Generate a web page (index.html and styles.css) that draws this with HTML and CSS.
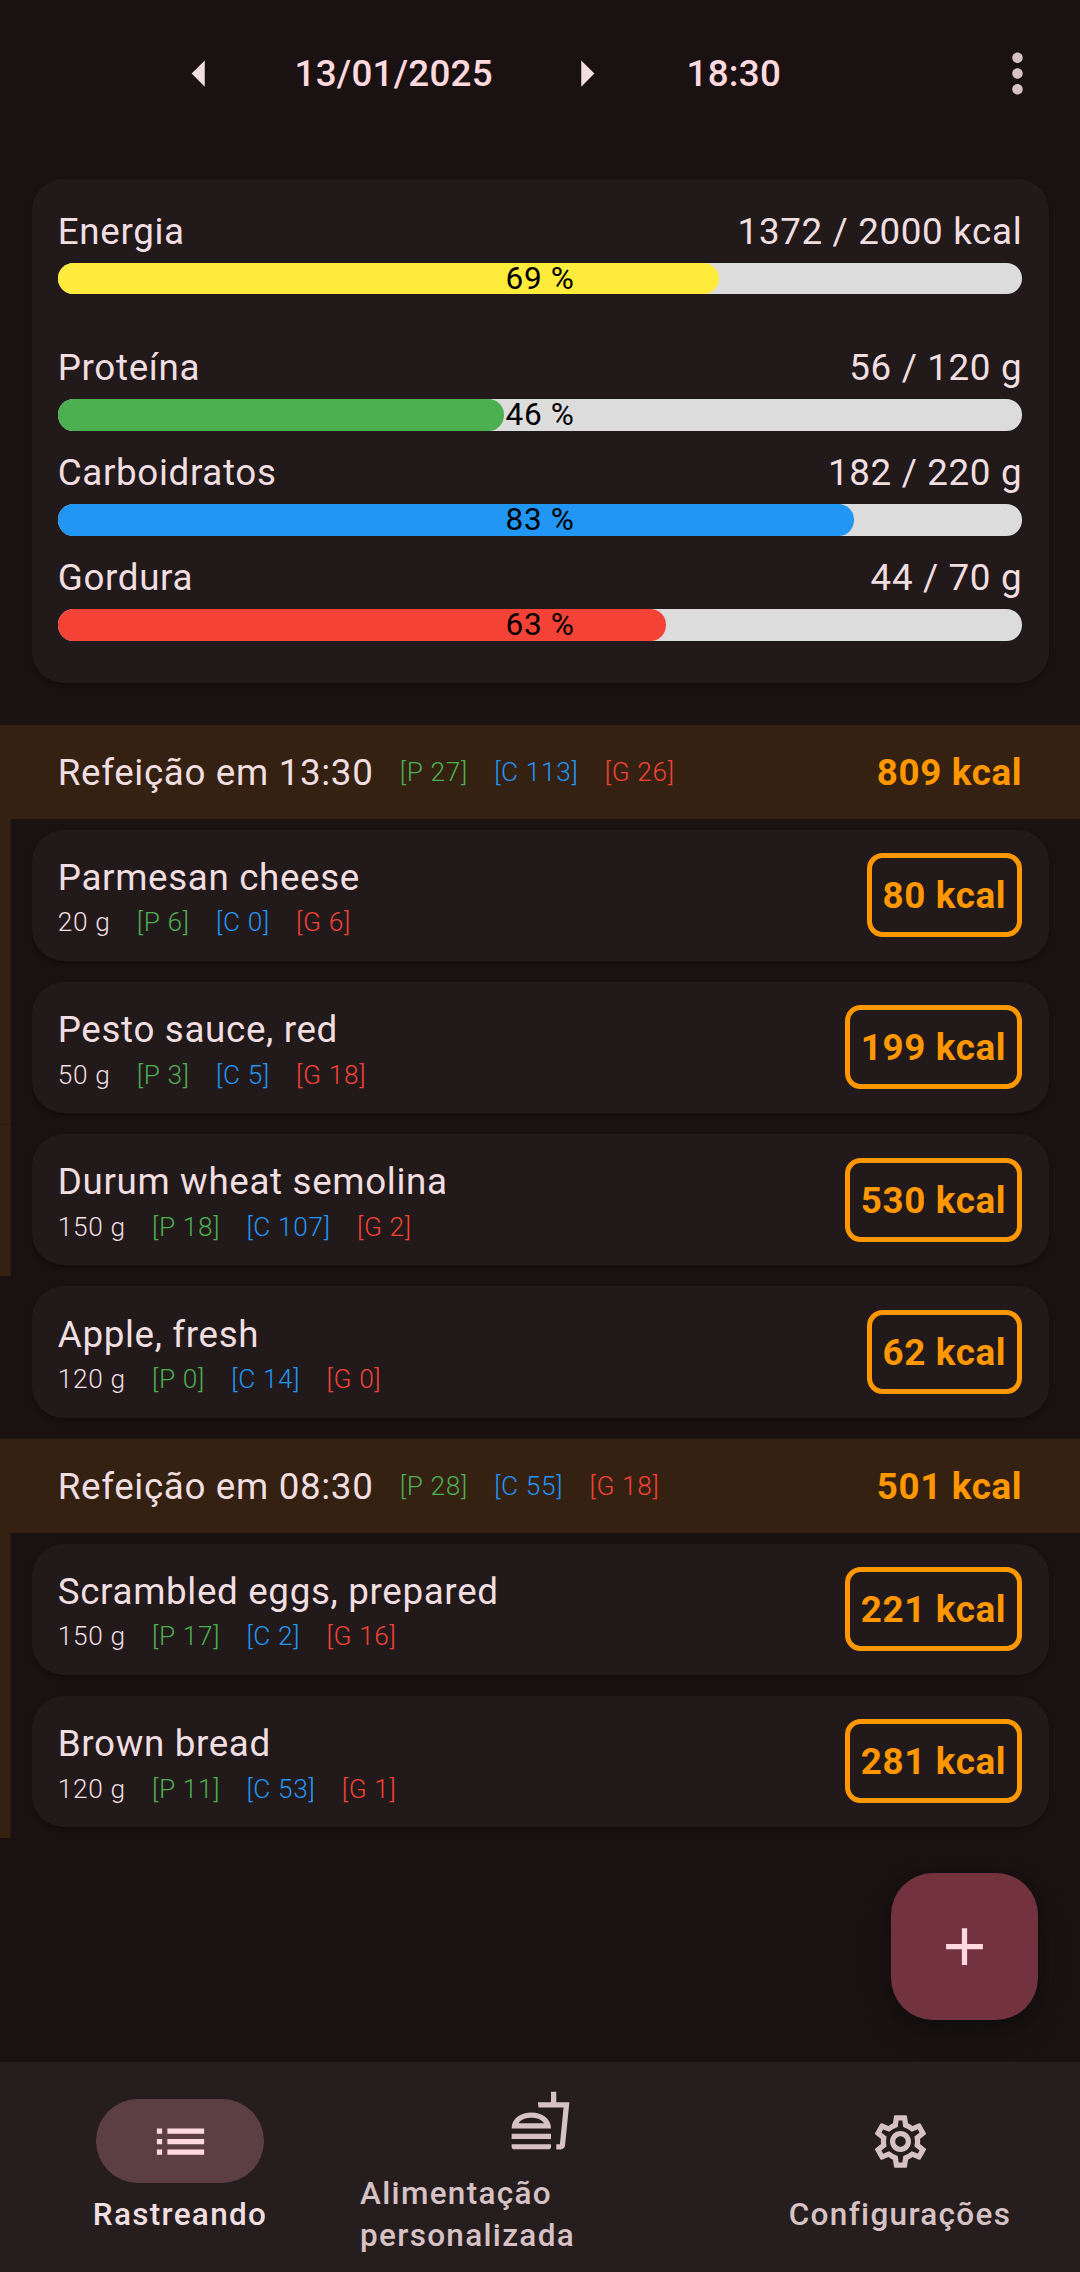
FILE: index.html
```
<!DOCTYPE html>
<html lang="pt-BR">
<head>
<meta charset="utf-8">
<title>Rastreando</title>
<link rel="stylesheet" href="styles.css">
</head>
<body>
<div class="app">
  <header class="topbar">
    <svg class="icon prev" viewBox="0 0 24 24"><path d="M14 7l-5 5 5 5V7z"/></svg>
    <span class="date">13/01/2025</span>
    <svg class="icon next" viewBox="0 0 24 24"><path d="M10 17l5-5-5-5v10z"/></svg>
    <span class="time">18:30</span>
    <svg class="icon more" viewBox="0 0 24 24"><path d="M12 8c1.1 0 2-.9 2-2s-.9-2-2-2-2 .9-2 2 .9 2 2 2zm0 2c-1.1 0-2 .9-2 2s.9 2 2 2 2-.9 2-2-.9-2-2-2zm0 6c-1.1 0-2 .9-2 2s.9 2 2 2 2-.9 2-2-.9-2-2-2z"/></svg>
  </header>

  <section class="card summary">
    <div class="goal energy">
      <div class="goal-text"><span>Energia</span><span>1372 / 2000 kcal</span></div>
      <div class="bar"><div class="fill yellow" style="width:68.6%"></div><span class="pct">69 %</span></div>
    </div>
    <div class="goal">
      <div class="goal-text"><span>Proteína</span><span>56 / 120 g</span></div>
      <div class="bar"><div class="fill green" style="width:46.3%"></div><span class="pct">46 %</span></div>
    </div>
    <div class="goal">
      <div class="goal-text"><span>Carboidratos</span><span>182 / 220 g</span></div>
      <div class="bar"><div class="fill blue" style="width:82.6%"></div><span class="pct">83 %</span></div>
    </div>
    <div class="goal">
      <div class="goal-text"><span>Gordura</span><span>44 / 70 g</span></div>
      <div class="bar"><div class="fill red" style="width:63.1%"></div><span class="pct">63 %</span></div>
    </div>
  </section>

  <main class="meals">
    <div class="meal-head">
      <span>Refeição em 13:30</span>
      <div class="macros"><span class="p">[P 27]</span><span class="c">[C 113]</span><span class="g">[G 26]</span></div>
      <span class="kcal">809 kcal</span>
    </div>
    <div class="row in-meal"><div class="card food">
      <div class="info"><div class="name">Parmesan cheese</div><div class="macros"><span>20 g</span><span class="p">[P 6]</span><span class="c">[C 0]</span><span class="g">[G 6]</span></div></div>
      <span class="badge">80 kcal</span>
    </div></div>
    <div class="row in-meal"><div class="card food">
      <div class="info"><div class="name">Pesto sauce, red</div><div class="macros"><span>50 g</span><span class="p">[P 3]</span><span class="c">[C 5]</span><span class="g">[G 18]</span></div></div>
      <span class="badge">199 kcal</span>
    </div></div>
    <div class="row in-meal seam"><div class="card food">
      <div class="info"><div class="name">Durum wheat semolina</div><div class="macros"><span>150 g</span><span class="p">[P 18]</span><span class="c">[C 107]</span><span class="g">[G 2]</span></div></div>
      <span class="badge">530 kcal</span>
    </div></div>
    <div class="row"><div class="card food">
      <div class="info"><div class="name">Apple, fresh</div><div class="macros"><span>120 g</span><span class="p">[P 0]</span><span class="c">[C 14]</span><span class="g">[G 0]</span></div></div>
      <span class="badge">62 kcal</span>
    </div></div>
    <div class="meal-head">
      <span>Refeição em 08:30</span>
      <div class="macros"><span class="p">[P 28]</span><span class="c">[C 55]</span><span class="g">[G 18]</span></div>
      <span class="kcal">501 kcal</span>
    </div>
    <div class="row in-meal"><div class="card food">
      <div class="info"><div class="name">Scrambled eggs, prepared</div><div class="macros"><span>150 g</span><span class="p">[P 17]</span><span class="c">[C 2]</span><span class="g">[G 16]</span></div></div>
      <span class="badge">221 kcal</span>
    </div></div>
    <div class="row in-meal"><div class="card food">
      <div class="info"><div class="name">Brown bread</div><div class="macros"><span>120 g</span><span class="p">[P 11]</span><span class="c">[C 53]</span><span class="g">[G 1]</span></div></div>
      <span class="badge">281 kcal</span>
    </div></div>
  </main>

  <button class="fab" aria-label="Adicionar"><svg class="icon" viewBox="0 0 24 24"><path d="M19 13h-6v6h-2v-6H5v-2h6V5h2v6h6v2z"/></svg></button>

  <nav class="nav">
    <a class="tab active">
      <span class="pill"><svg class="icon" viewBox="0 0 24 24"><path d="M3 13h2v-2H3v2zm0 4h2v-2H3v2zm0-8h2V7H3v2zm4 4h14v-2H7v2zm0 4h14v-2H7v2zM7 7v2h14V7H7z"/></svg></span>
      <span class="label">Rastreando</span>
    </a>
    <a class="tab">
      <span class="pill"><svg class="icon" viewBox="0 0 24 24"><path d="M1 21.98c0 .56.45 1.01 1.01 1.01H15c.56 0 1.01-.45 1.01-1.01V21H1v.98zM8.5 8.99C4.75 8.99 1 11 1 15h15c0-4-3.75-6.01-7.5-6.01zM3.62 13c1.11-1.55 3.47-2.01 4.88-2.01s3.77.46 4.88 2.01H3.62zM1 17h15v2H1zM18 5V1h-2v4h-5l.23 2h9.56l-1.4 14H18v2h1.72c.84 0 1.53-.65 1.63-1.47L23 5h-5z"/></svg></span>
      <span class="label">Alimentação personalizada</span>
    </a>
    <a class="tab">
      <span class="pill"><svg class="icon" viewBox="0 0 24 24"><path d="M19.43 12.98c.04-.32.07-.64.07-.98 0-.34-.03-.66-.07-.98l2.11-1.65c.19-.15.24-.42.12-.64l-2-3.46c-.09-.16-.26-.25-.44-.25-.06 0-.12.01-.17.03l-2.49 1c-.52-.4-1.08-.73-1.69-.98l-.38-2.65C14.46 2.18 14.25 2 14 2h-4c-.25 0-.46.18-.49.42l-.38 2.65c-.61.25-1.17.59-1.69.98l-2.49-1c-.06-.02-.12-.03-.18-.03-.17 0-.34.09-.43.25l-2 3.46c-.13.22-.07.49.12.64l2.11 1.65c-.04.32-.07.65-.07.98 0 .33.03.66.07.98l-2.11 1.65c-.19.15-.24.42-.12.64l2 3.46c.09.16.26.25.44.25.06 0 .12-.01.17-.03l2.49-1c.52.4 1.08.73 1.69.98l.38 2.65c.03.24.24.42.49.42h4c.25 0 .46-.18.49-.42l.38-2.65c.61-.25 1.17-.59 1.69-.98l2.49 1c.06.02.12.03.18.03.17 0 .34-.09.43-.25l2-3.46c.12-.22.07-.49-.12-.64l-2.11-1.65zm-1.98-1.71c.04.31.05.52.05.73 0 .21-.02.43-.05.73l-.14 1.13.89.7 1.08.84-.7 1.21-1.27-.51-1.04-.42-.9.68c-.43.32-.84.56-1.25.73l-1.06.43-.16 1.13-.2 1.35h-1.4l-.19-1.35-.16-1.13-1.06-.43c-.43-.18-.83-.41-1.23-.71l-.91-.7-1.06.43-1.27.51-.7-1.21 1.08-.84.89-.7-.14-1.13c-.03-.31-.05-.54-.05-.74s.02-.43.05-.73l.14-1.13-.89-.7-1.08-.84.7-1.21 1.27.51 1.04.42.9-.68c.43-.32.84-.56 1.25-.73l1.06-.43.16-1.13.2-1.35h1.39l.19 1.35.16 1.13 1.06.43c.43.18.83.41 1.23.71l.91.7 1.06-.43 1.27-.51.7 1.21-1.07.85-.89.7.14 1.13zM12 8c-2.21 0-4 1.79-4 4s1.79 4 4 4 4-1.79 4-4-1.79-4-4-4zm0 6c-1.1 0-2-.9-2-2s.9-2 2-2 2 .9 2 2-.9 2-2 2z"/></svg></span>
      <span class="label">Configurações</span>
    </a>
  </nav>
</div>
</body>
</html>
```
FILE: styles.css
```
* { box-sizing: border-box; }
body {
  margin: 0;
  background: #1a1112;
  color: #f0dee0;
  font: 400 36.75px/52.5px Roboto, sans-serif;
  letter-spacing: 0.656px;
}
.app { position: relative; width: 1080px; height: 2272px; display: flex; flex-direction: column; overflow: hidden; }
.icon { width: 63px; height: 63px; fill: currentColor; flex: none; display: block; }

.topbar { height: 147px; display: flex; align-items: center; padding: 0 31.5px 0 167.5px; font-weight: 500; letter-spacing: 0.2625px; color: #ffd9de; }
.prev, .next { color: #f0dee0; }
.date { margin-left: 64px; width: 260px; padding-top: 2px; }
.time { margin-left: 69px; padding-top: 2px; }
.more { color: #d6c2c4; margin-left: auto; }

.card { background: #22191b; border-radius: 31.5px; box-shadow: 0 3px 5px rgba(0,0,0,.3); }
.summary { margin: 31.5px 31.5px 0; height: 504px; padding: 26.25px 26.25px 0; }
.goal { height: 105px; }
.goal.energy { height: 136.5px; }
.goal-text { display: flex; justify-content: space-between; padding-top: 1px; margin-bottom: 4.25px; }
.bar { display: flex; position: relative; height: 31.5px; border-radius: 15.75px; background: #dcdcdc; }
.fill { border-radius: 15.75px; }
.yellow { background: #ffeb3b; }
.green { background: #4caf50; }
.blue { background: #2196f3; }
.red { background: #f44336; }
.pct { position: absolute; inset: 0; text-align: center; color: #000; font-size: 31.5px; line-height: 31.5px; }

.meals { margin-top: 31.5px; }
.meal-head { margin-top: 10.5px; height: 94.5px; padding: 2px 57.75px 0; display: flex; align-items: center; gap: 26.25px; background: #342112; }
.kcal { margin-left: auto; color: #ff9800; font-weight: 700; }
.row { padding: 10.5px 31.5px; }
.in-meal { background: linear-gradient(#342112, #342112) 0 0 / 10.67px 100% no-repeat; }
.seam { background-image: linear-gradient(#281914 1px, #342112 1px); }
.food { height: 131.25px; padding: 0 26.25px; display: flex; align-items: center; justify-content: space-between; }
.info { padding-top: 2.5px; }
.macros { display: flex; gap: 26.25px; font-size: 26.25px; line-height: 36.75px; font-weight: 300; }
.badge { height: 84px; line-height: 75.5px; padding: 0 11px; border: 5.25px solid #ff9800; border-radius: 15.75px; color: #ff9800; font-weight: 700; }
.p { color: #4caf50; }
.c { color: #2196f3; }
.g { color: #f44336; }

.fab { position: absolute; right: 42px; bottom: 252px; width: 147px; height: 147px; padding: 0; border: 0; border-radius: 42px; display: grid; place-items: center; background: #72333f; color: #ffd9de; box-shadow: 0 12px 24px rgba(16,16,16,.65), 0 4px 10px rgba(16,16,16,.5); }
.nav { margin-top: auto; height: 210px; padding-top: 1px; display: grid; grid-template-columns: repeat(3, 1fr); background: #261d1e; font-size: 31.5px; line-height: 42px; font-weight: 500; letter-spacing: 1.3125px; color: #d6c2c4; }
.tab { display: flex; flex-direction: column; align-items: center; justify-content: center; gap: 10.5px; }
.pill { width: 168px; height: 84px; border-radius: 42px; display: grid; place-items: center; }
.active { color: #f0dee0; }
.active .pill { background: #5c3f43; color: #ffd9de; }
```
